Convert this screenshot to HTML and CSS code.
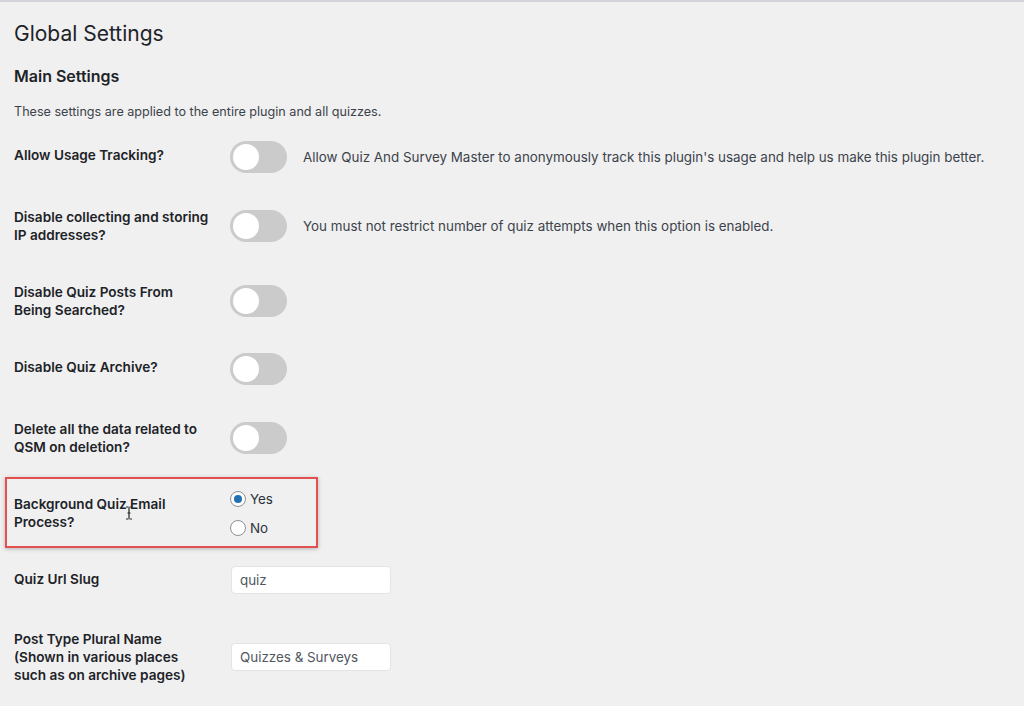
FILE: index.html
```html
<!DOCTYPE html>
<html lang="en">
<head>
    <meta charset="UTF-8">
    <title>Global Settings</title>
    <link rel="stylesheet" href="styles.css">
</head>
<body>

    <div class="wrap">
        <h1>Global Settings</h1>
        <h2>Main Settings</h2>
        <p class="intro">These settings are applied to the entire plugin and all quizzes.</p>

        <div class="form-table">
            <div class="row row-short">
                <div class="th">Allow Usage Tracking?</div>
                <div class="td">
                    <span class="toggle"><span class="knob"></span></span>
                    <span class="desc">Allow Quiz And Survey Master to anonymously track this plugin's usage and help us make this plugin better.</span>
                </div>
            </div>
            <div class="row">
                <div class="th">Disable collecting and storing IP addresses?</div>
                <div class="td">
                    <span class="toggle"><span class="knob"></span></span>
                    <span class="desc">You must not restrict number of quiz attempts when this option is enabled.</span>
                </div>
            </div>
            <div class="row">
                <div class="th">Disable Quiz Posts From Being Searched?</div>
                <div class="td">
                    <span class="toggle"><span class="knob"></span></span>
                </div>
            </div>
            <div class="row row-short">
                <div class="th">Disable Quiz Archive?</div>
                <div class="td">
                    <span class="toggle"><span class="knob"></span></span>
                </div>
            </div>
            <div class="row">
                <div class="th">Delete all the data related to QSM on deletion?</div>
                <div class="td">
                    <span class="toggle"><span class="knob"></span></span>
                </div>
            </div>
            <div class="row row-radio">
                <div class="th">Background Quiz Email Process?</div>
                <div class="td radios">
                    <label class="radio"><span class="dot checked"></span>Yes</label>
                    <label class="radio"><span class="dot"></span>No</label>
                </div>
                <div class="highlight"></div>
                <svg class="cursor" width="8" height="14" viewBox="0 0 8 14">
                    <path d="M1 1h2.5M4.5 1H7M4 1.5v11M1 13h2.5M4.5 13H7M2.5 7h3" stroke="#222" stroke-width="1.2" fill="none"/>
                </svg>
            </div>
            <div class="row row-input">
                <div class="th">Quiz Url Slug</div>
                <div class="td">
                    <input type="text" class="text-input" value="quiz">
                </div>
            </div>
            <div class="row row-last">
                <div class="th">Post Type Plural Name<br>(Shown in various places such as on archive pages)</div>
                <div class="td">
                    <input type="text" class="text-input" value="Quizzes &amp; Surveys">
                </div>
            </div>
        </div>
    </div>

</body>
</html>
```

FILE: styles.css
```css
body {
    margin: 0;
    background-color: #f0f0f1;
    border-top: 2px solid #d3d3da;
    font-family: Inter, "Noto Sans", sans-serif;
    color: #1d2327;
    overflow: hidden;
}
.wrap {
    padding: 0 14px;
}
h1 {
    font-size: 21px;
    font-weight: 400;
    line-height: 29px;
    margin: 17px 0 0;
}
h2 {
    font-size: 16px;
    font-weight: 600;
    line-height: 22px;
    margin: 17px 0 0;
}
.intro {
    font-size: 12.6px;
    color: #3c434a;
    line-height: 18px;
    margin: 16px 0 0;
}
.form-table {
    margin-top: 5px;
}
.row {
    display: flex;
    position: relative;
}
.th {
    width: 196px;
    margin-right: 20px;
    padding: 20px 0 19px;
    font-size: 13.6px;
    font-weight: 600;
    line-height: 18px;
    flex-shrink: 0;
}
.td {
    display: flex;
    align-items: center;
    padding: 15px 0;
    font-size: 13.4px;
    color: #3c434a;
}
.toggle {
    display: inline-block;
    position: relative;
    width: 57px;
    height: 32px;
    border-radius: 16px;
    background-color: #cbcbcb;
    flex-shrink: 0;
}
.knob {
    position: absolute;
    left: 3px;
    top: 3px;
    width: 26px;
    height: 26px;
    border-radius: 50%;
    background-color: #fff;
}
.desc {
    margin-left: 16px;
}
.row-radio .radios {
    flex-direction: column;
    align-items: flex-start;
    align-self: flex-start;
    padding: 14px 0 0;
    gap: 9px;
}
.radio {
    display: flex;
    align-items: center;
    line-height: 20px;
    font-size: 13.4px;
    color: #2c3338;
}
.dot {
    width: 14px;
    height: 14px;
    border: 1px solid #8c8f94;
    border-radius: 50%;
    background-color: #fff;
    margin-right: 4px;
    position: relative;
}
.dot.checked::after {
    content: "";
    position: absolute;
    left: 3px;
    top: 3px;
    width: 8px;
    height: 8px;
    border-radius: 50%;
    background-color: #2271b1;
}
.highlight {
    position: absolute;
    left: -9px;
    top: 2px;
    width: 309px;
    height: 67px;
    border: 2px solid #e2514f;
    box-shadow: 0 1px 4px rgba(0, 0, 0, 0.25);
}
.cursor {
    position: absolute;
    left: 111px;
    top: 31px;
}
.row-input .td {
    padding: 16px 0;
}
.text-input {
    width: 160px;
    height: 28px;
    box-sizing: border-box;
    margin-left: 1px;
    padding: 0 8px;
    border: 1px solid #e4e4e6;
    border-radius: 4px;
    background-color: #fff;
    font-family: Inter, "Noto Sans", sans-serif;
    font-size: 13.4px;
    color: #50575e;
}
```
